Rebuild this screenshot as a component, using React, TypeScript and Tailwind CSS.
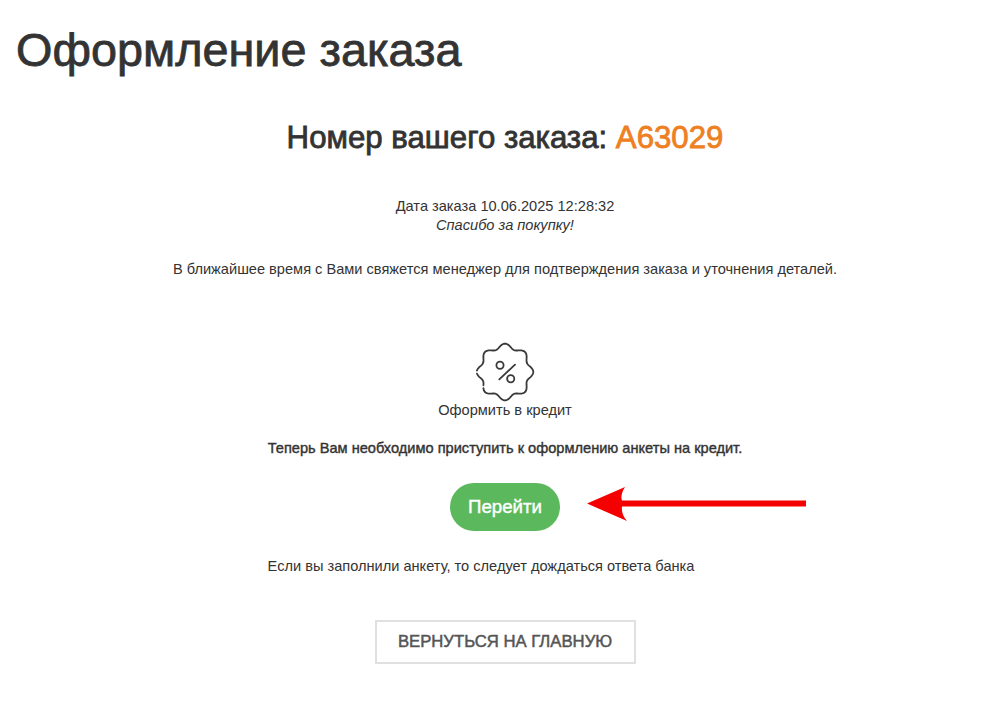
const font = "font-['Liberation_Sans',Arial,sans-serif]";

// scalloped badge outline, 8 lobes
const badgePath = (() => {
  const cx = 30;
  const cy = 30;
  let d = "";
  for (let i = 0; i <= 240; i++) {
    const a = (i / 240) * Math.PI * 2 - Math.PI / 2;
    const r = 26 + 2.3 * Math.cos(8 * (a + Math.PI / 2));
    const x = (cx + r * Math.cos(a)).toFixed(2);
    const y = (cy + r * Math.sin(a)).toFixed(2);
    d += `${i === 0 ? "M" : "L"}${x} ${y} `;
  }
  return d;
})();

function CreditBadge() {
  return (
    <svg width="60" height="60" viewBox="0 0 60 60" fill="none" stroke="#3a3a3a" strokeWidth="1.8" strokeLinecap="round">
      <path d={badgePath} strokeDasharray="118 3 14 3 200" />
      <circle cx="25" cy="23.3" r="3.6" />
      <circle cx="35.7" cy="36.7" r="3.6" />
      <path d="M40 22.7 L24.3 37.3" />
    </svg>
  );
}

function RedArrow() {
  return (
    <svg width="220" height="36" viewBox="0 0 220 36" className="absolute left-[137px] top-[3px]">
      <path d="M0 17.5 L38 1 Q33 9 35 14.5 L219 14.5 L219 20.5 L35 20.5 Q34 28 40 35 Z" fill="#f50000" />
    </svg>
  );
}

export default function App() {
  return (
    <div className={`w-[985px] h-[728px] overflow-hidden bg-white text-[#333] ${font}`}>
      <h1 className="pl-4 pt-[20px] text-[46.8px] leading-[60px] font-normal text-[#333] [-webkit-text-stroke:0.8px_#333]">
        Оформление заказа
      </h1>

      <div className="flex flex-col items-center pl-[25px]">
        <h2 className="mt-[28px] text-[31.2px] leading-[60px] font-normal [-webkit-text-stroke:0.8px_#333]">
          Номер вашего заказа:{" "}
          <span className="text-[#ee7f22] [-webkit-text-stroke:0.8px_#ee7f22]">A63029</span>
        </h2>

        <p className="mt-[29px] text-[14.6px] leading-[19px]">Дата заказа 10.06.2025 12:28:32</p>
        <p className="text-[14.6px] leading-[19px] italic">Спасибо за покупку!</p>
        <p className="mt-[24px] text-[14.6px] leading-[20px]">
          В ближайшее время с Вами свяжется менеджер для подтверждения заказа и уточнения деталей.
        </p>

        <div className="mt-[63px]">
          <CreditBadge />
        </div>
        <p className="mt-[-2px] text-[14.6px] leading-[20px]">Оформить в кредит</p>
        <p className="mt-[18px] text-[14.6px] leading-[20px] font-normal [-webkit-text-stroke:0.4px_#333]">
          Теперь Вам необходимо приступить к оформлению анкеты на кредит.
        </p>

        <div className="relative mt-[25px] w-[110px] h-[48px]">
          <button className="w-[110px] h-[48px] rounded-[24px] bg-[#5cb85c] text-white text-[18.7px] leading-[48px] [-webkit-text-stroke:0.4px_#fff]">
            Перейти
          </button>
          <RedArrow />
        </div>

        <p className="mt-[25px] mr-[48px] text-[14.6px] leading-[20px]">
          Если вы заполнили анкету, то следует дождаться ответа банка
        </p>

        <button className="mt-[44px] w-[261px] h-[44px] border-2 border-[#e0e0e0] text-[16.7px] text-[#555] [-webkit-text-stroke:0.5px_#555]">
          ВЕРНУТЬСЯ НА ГЛАВНУЮ
        </button>
      </div>
    </div>
  );
}
